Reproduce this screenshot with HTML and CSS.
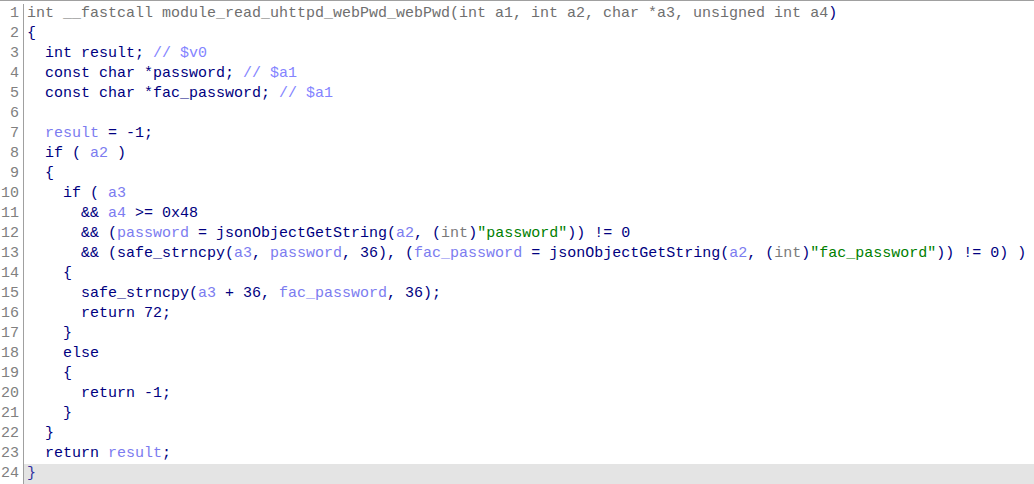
FILE: index.html
```html
<!DOCTYPE html>
<html lang="en">
<head>
  <meta charset="UTF-8">
  <title>Pseudocode</title>
  <link rel="stylesheet" href="styles.css">
</head>
<body>
  <div class="view">
    <div class="line"><span class="num">1</span><span class="code"><span class="decl">int __fastcall module_read_uhttpd_webPwd_webPwd(int a1, int a2, char *a3, unsigned int a4</span>)</span></div>
    <div class="line"><span class="num">2</span><span class="code">{</span></div>
    <div class="line"><span class="num">3</span><span class="code">  int result; <span class="cmt">// $v0</span></span></div>
    <div class="line"><span class="num">4</span><span class="code">  const char *password; <span class="cmt">// $a1</span></span></div>
    <div class="line"><span class="num">5</span><span class="code">  const char *fac_password; <span class="cmt">// $a1</span></span></div>
    <div class="line"><span class="num">6</span><span class="code"></span></div>
    <div class="line"><span class="num">7</span><span class="code">  <span class="var">result</span> = -1;</span></div>
    <div class="line"><span class="num">8</span><span class="code">  if ( <span class="var">a2</span> )</span></div>
    <div class="line"><span class="num">9</span><span class="code">  {</span></div>
    <div class="line"><span class="num">10</span><span class="code">    if ( <span class="var">a3</span></span></div>
    <div class="line"><span class="num">11</span><span class="code">      &amp;&amp; <span class="var">a4</span> &gt;= 0x48</span></div>
    <div class="line"><span class="num">12</span><span class="code">      &amp;&amp; (<span class="var">password</span> = jsonObjectGetString(<span class="var">a2</span>, (<span class="cast">int</span>)<span class="str">"password"</span>)) != 0</span></div>
    <div class="line"><span class="num">13</span><span class="code">      &amp;&amp; (safe_strncpy(<span class="var">a3</span>, <span class="var">password</span>, 36), (<span class="var">fac_password</span> = jsonObjectGetString(<span class="var">a2</span>, (<span class="cast">int</span>)<span class="str">"fac_password"</span>)) != 0) )</span></div>
    <div class="line"><span class="num">14</span><span class="code">    {</span></div>
    <div class="line"><span class="num">15</span><span class="code">      safe_strncpy(<span class="var">a3</span> + 36, <span class="var">fac_password</span>, 36);</span></div>
    <div class="line"><span class="num">16</span><span class="code">      return 72;</span></div>
    <div class="line"><span class="num">17</span><span class="code">    }</span></div>
    <div class="line"><span class="num">18</span><span class="code">    else</span></div>
    <div class="line"><span class="num">19</span><span class="code">    {</span></div>
    <div class="line"><span class="num">20</span><span class="code">      return -1;</span></div>
    <div class="line"><span class="num">21</span><span class="code">    }</span></div>
    <div class="line"><span class="num">22</span><span class="code">  }</span></div>
    <div class="line"><span class="num">23</span><span class="code">  return <span class="var">result</span>;</span></div>
    <div class="line current"><span class="num">24</span><span class="code"><span class="brace">}</span></span></div>
  </div>
</body>
</html>
```

FILE: styles.css
```css
body {
  margin: 0;
  background-color: #ffffff;
  font-family: "Liberation Mono", "DejaVu Sans Mono", monospace;
  font-size: 15px;
  overflow: hidden;
}

.view {
  border-top: 1px solid #a0a0a0;
  padding-top: 3px;
}

.line {
  display: flex;
  height: 20px;
  line-height: 20px;
  white-space: pre;
}

.num {
  width: 19px;
  flex: none;
  padding-right: 4px;
  text-align: right;
  color: #808080;
  border-right: 1px solid #a0a0a0;
}

.code {
  flex: 1;
  padding-left: 3px;
  color: #000080;
}

.current .code {
  background-color: #e4e4e4;
}

.decl {
  color: #6f6f6f;
}

.var {
  color: #7c7cf0;
}

.cmt {
  color: #8484ff;
}

.cast {
  color: #7a7a7a;
}

.str {
  color: #008000;
}

.brace {
  color: #3030a0;
}
```
